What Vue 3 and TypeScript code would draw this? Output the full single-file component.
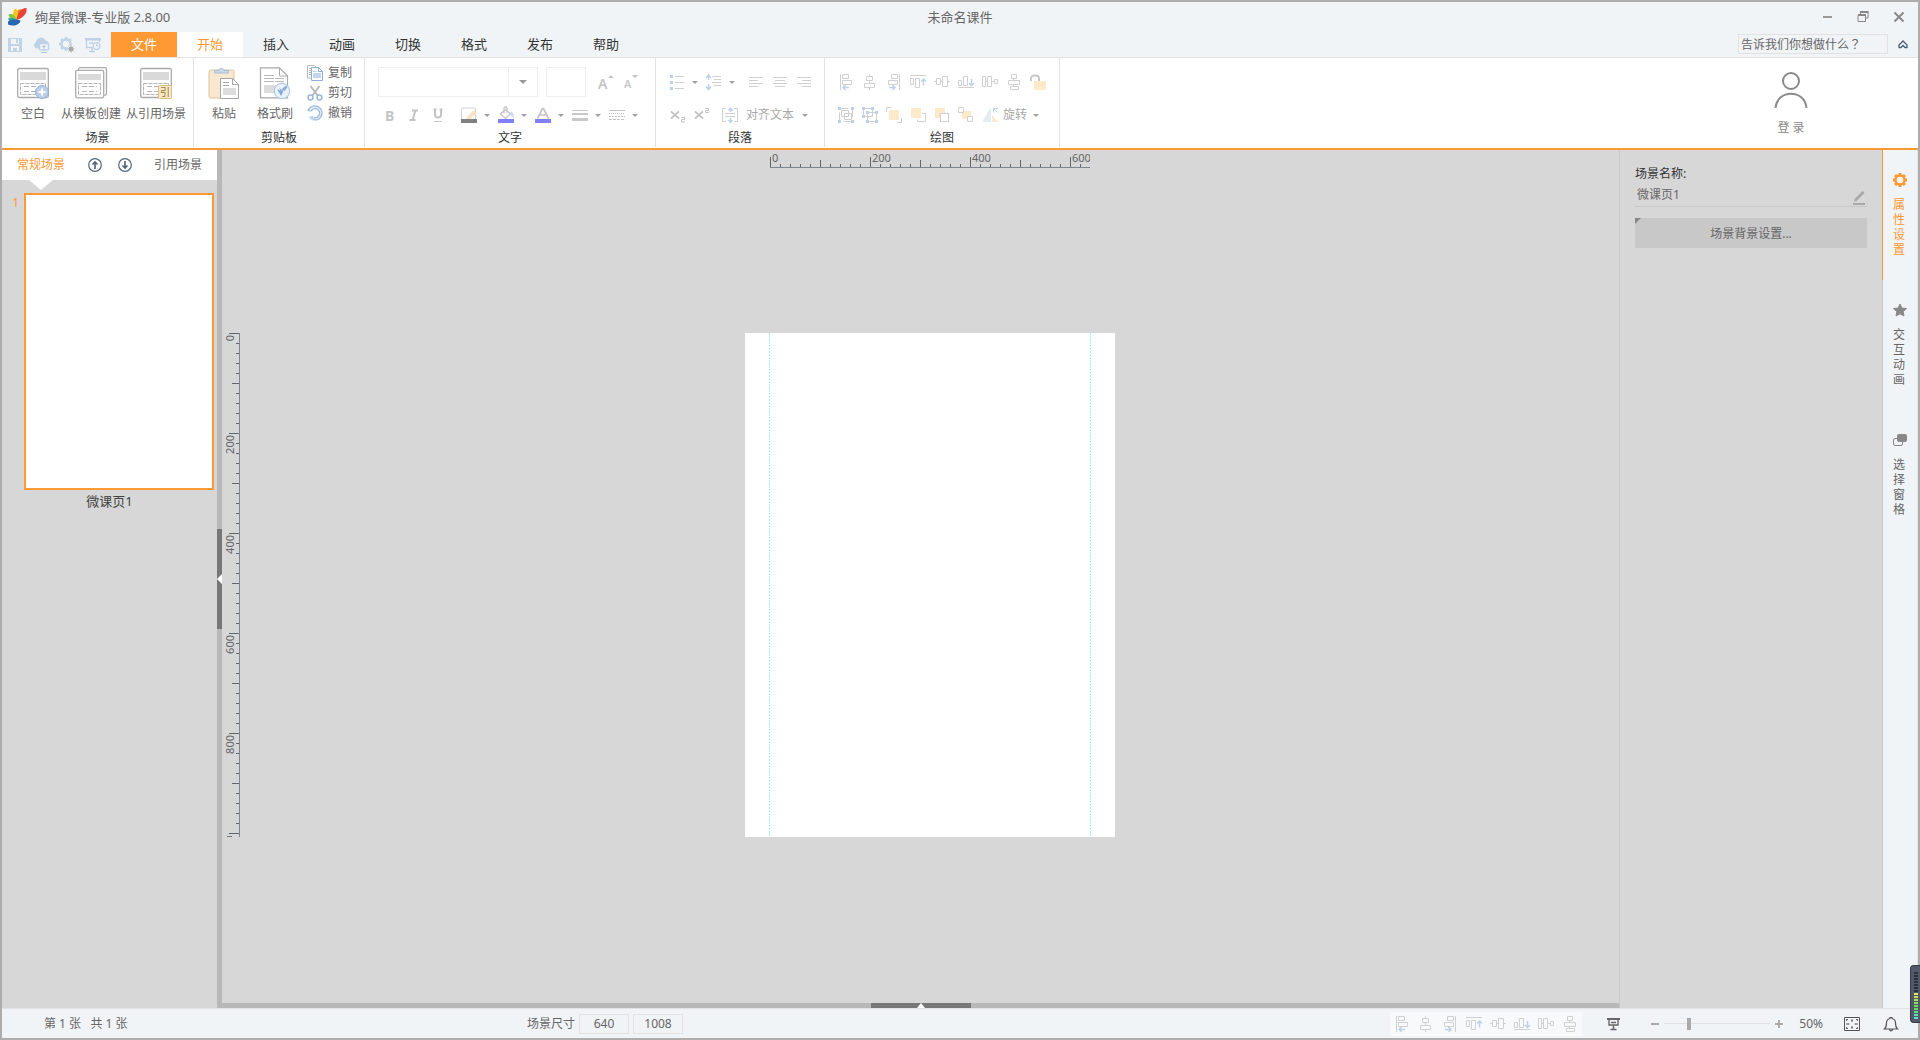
<script setup lang="ts">
import { ref } from 'vue'

interface Tool { icon: string; label: string; caret?: boolean }

const G = '#d0d0d0'
const B = '#bcd2ea'
const Y = '#fdeacb'

const glyphs: Record<string, string> = {
  save: `<path fill="#c3d3e6" fill-rule="evenodd" d="M1 1h14v14h-14zM4 2v5h8v-5zM4 9v5h8v-5z"/><path fill="#c3d3e6" d="M9 2h2v4h-2zM6 11h4v3h-4z"/>`,
  cloud: `<path fill="#bfd1e6" d="M3.500 11.500a3.500 3.500 0 0 1-.5-6.500 5 5 0 0 1 9.500-1.500 3.500 3.500 0 0 1 3 4h-9v4z"/><rect x="6.500" y="6.500" width="9" height="6.500" rx="1" fill="#f1f4f7" stroke="#bfd1e6" stroke-width="1.500"/><path stroke="#a9c3e0" d="M11 8v4M9.500 9.500h3M8 15.500h6" fill="none"/>`,
  gears: `<circle cx="7" cy="7" r="4.500" fill="none" stroke="#c3d3e6" stroke-width="2.500"/><path stroke="#c3d3e6" stroke-width="2.500" d="M7 0v2M7 12v2M0 7h2M2 2l1.500 1.500M12 2l-1.500 1.500M2 12l1.500-1.500"/><circle cx="12" cy="12" r="3.600" fill="#f1f4f7"/><circle cx="12" cy="12" r="2.200" fill="#a8a8a8"/><path stroke="#a8a8a8" d="M12 8.500v7M8.500 12h7M9.500 9.500l5 5M14.500 9.500l-5 5"/>`,
  board: `<path fill="#bfd1e6" d="M0 1h16v2.500h-16z"/><path fill="none" stroke="#bfd1e6" stroke-width="1.400" d="M1.500 3v7.500h6M14.500 3v2M4 6h4M7 10.500v3.500M4 14.500h6"/><circle cx="11.500" cy="9" r="3.300" fill="#f1f4f7" stroke="#bfd1e6" stroke-width="1.300"/><path stroke="#bfd1e6" d="M11.500 7v2h2" fill="none"/>`,
  copy: `<path fill="#fff" stroke="#b9b9b9" d="M.5.5h7l2.500 2.500v10h-9.500z"/><path stroke="#b9b9b9" d="M2 3.500h3M2 5.500h3M2 7.500h3M2 9.500h3"/><path fill="#fff" stroke="#8fb1d8" d="M4.500 2.500h7l4 4v9h-11z"/><path fill="none" stroke="#8fb1d8" d="M11.500 2.500v4h4"/><path fill="#c3d6ee" d="M6 6h4v1h-4zM6 8h8v5h-8z"/>`,
  cut: `<path stroke="#b9b9b9" stroke-width="2" d="M3.500 1l7.500 10M12.500 1l-7.500 10"/><circle cx="3.500" cy="12.500" r="2.400" fill="#fff" stroke="#9ab8dc" stroke-width="1.500"/><circle cx="12.500" cy="12.500" r="2.400" fill="#fff" stroke="#9ab8dc" stroke-width="1.500"/>`,
  undo: `<path fill="#e6effa" stroke="#9ab8dc" stroke-width="1.200" stroke-linejoin="round" d="M1 5.500C3 .5 9-.5 12.500 2.500c4 3.500 3 9.500-1.500 12-2 .8-3 .6-4 .3v-2c5 0 7-4.500 4.500-7.500-2-2.300-5.500-2.300-7.500.7z"/><path fill="#c3d6ee" d="M6.500 10.500l-5 1.500 4.500 4z"/>`,
  fontUp: `<text x="0" y="15" font-size="14" font-weight="600" fill="#c4c4c4">A</text><path fill="#c0c0c0" d="M10.500 4l2.500-3 2.500 3z"/>`,
  fontDown: `<text x="2" y="14" font-size="11" font-weight="600" fill="#c8c8c8">A</text><path fill="#c0c0c0" d="M10 1h6l-3 3z"/>`,
  bold: `<text x="3" y="13.500" font-size="14" font-weight="700" fill="#c4c4c4">B</text>`,
  italic: `<path fill="none" stroke="#c4c4c4" stroke-width="2" d="M6 3.500h6M3.500 13h6M9.500 3.500l-3 9.500"/>`,
  underline: `<path fill="none" stroke="#c4c4c4" stroke-width="2" d="M5 2.500v5a3 3 0 0 0 6 0v-5M3.500 2.500h3M9.500 2.500h3"/><path stroke="#c4c4c4" d="M4 14.500h8"/>`,
  pen: `<rect x=".5" y="1" width="14" height="12" rx="1" fill="none" stroke="${G}"/><path fill="#f9e3c4" d="M13 3l3 3-7 6-4.500 1.500 1.500-4z"/><path fill="#808080" d="M0 12h16v4h-16z"/>`,
  bucket: `<path fill="#fff" stroke="#c4c4c4" stroke-width="1.300" d="M2.500 7l5-4.500 5 4.500-5 4.500z"/><path fill="none" stroke="#c4c4c4" stroke-width="1.300" d="M6 6v-4.500a1.500 1.500 0 0 1 3 0v4"/><path fill="#c8dcf3" d="M12 4.500c3 .5 4.500 3 3.500 6-2 0-2.500-1-2.500-2.500z"/><path fill="#8080ff" d="M0 12h16v4h-16z"/>`,
  fontColor: `<path fill="none" stroke="#c4c4c4" stroke-width="1.700" d="M2.500 11.500l5-10h1l5 10M4.500 8h7"/><path fill="#8080ff" d="M0 12h16v4h-16z"/>`,
  lineWeight: `<path stroke="#c8c8c8" d="M0 3.500h16"/><path fill="#c8c8c8" d="M0 6h16v2h-16zM0 11h16v3h-16z"/>`,
  lineDash: `<path stroke="#c4c4c4" d="M0 3.500h16"/><path stroke="#c4c4c4" stroke-dasharray="1 1" d="M0 6.500h16"/><path stroke="#c4c4c4" stroke-dasharray="2 1" d="M0 9.500h16"/><path stroke="#c4c4c4" stroke-dasharray="3 1" d="M0 12.500h16"/>`,
  bullets: `<path fill="#bcd2ea" d="M1 1h3v3h-3zM1 7h3v3h-3zM1 13h3v3h-3z"/><path stroke="${G}" d="M6 2.500h9M6 8.500h9M6 14.500h9"/>`,
  spacing: `<path fill="none" stroke="${B}" stroke-width="1.500" d="M2.500 1v5M0 4l2.500-3L5 4M2.500 10v5.500M0 12.500L2.500 15.500 5 12.500"/><path stroke="${G}" d="M6 2.500h9M8 5.500h7M6 8.500h9M8 11.500h7"/>`,
  textL: `<path stroke="${G}" d="M1 3.500h14M1 6.500h9M1 9.500h14M1 12.500h9"/>`,
  textC: `<path stroke="${G}" d="M1 3.500h14M3 6.500h10M1 9.500h14M3 12.500h10"/>`,
  textR: `<path stroke="${G}" d="M1 3.500h14M6 6.500h9M1 9.500h14M6 12.500h9"/>`,
  sub: `<path stroke="#c4c4c4" stroke-width="1.800" d="M1 4.500l8 7M9 4.500l-8 7"/><path fill="none" stroke="#c4c4c4" d="M11 10.500h3.500v2h-3v2.500h3.500"/>`,
  sup: `<path stroke="#c4c4c4" stroke-width="1.800" d="M1 4.500l8 7M9 4.500l-8 7"/><path fill="none" stroke="#c4c4c4" d="M11 1.500h3.500v2h-3v2h3.500"/>`,
  textAlign: `<path fill="none" stroke="${G}" d="M4 1.500h-3.500v13h3.500M12 1.500h3.500v13h-3.500M3 6.500h10M3 9.500h10"/><path fill="none" stroke="${B}" stroke-width="1.400" d="M8.500 1v4M6.500 3.500l2-2.500 2 2.500M8.500 11v4.500M6.500 13l2 2.500 2-2.500"/>`,
  alignL: `<path fill="none" stroke="${G}" d="M2.500 0v16M4.500.5h6v4h-6zM4.500 6.500h9v4h-9z"/><path fill="none" stroke="${B}" stroke-width="1.500" d="M5 13.500h6M7.500 11l-2.500 2.500 2.500 2.500"/>`,
  alignC: `<path fill="none" stroke="${G}" d="M7.500 0v2.500M7.500 6.500v3M7.500 13.500v2.500M4.500 2.500h6v4h-6zM2.500 9.500h10v4h-10z"/>`,
  alignR: `<path fill="none" stroke="${G}" d="M13.500 0v16M5.500.5h6v4h-6zM2.500 6.500h9v4h-9z"/><path fill="none" stroke="${B}" stroke-width="1.500" d="M3 13.500h6M6.500 11l2.500 2.500-2.500 2.500"/>`,
  alignT: `<path fill="none" stroke="${G}" d="M0 1.500h16M.5 4.500h3v6h-3zM5.500 4.500h4v9h-4z"/><path fill="none" stroke="${B}" stroke-width="1.500" d="M13.500 5v6.500M11 7.500l2.500-2.500 2.500 2.500"/>`,
  alignM: `<path fill="none" stroke="${G}" d="M0 7.500h2.500M6.500 7.500h2M13.500 7.500h2.500M2.500 4.500h4v6h-4zM8.500 2.500h5v10h-5z"/>`,
  alignB: `<path fill="none" stroke="${G}" d="M0 13.500h16M.5 6.500h3v5h-3zM5.500 2.500h4v9h-4z"/><path fill="none" stroke="${B}" stroke-width="1.500" d="M13.500 5v6.500M11 9l2.500 2.500 2.500-2.500"/>`,
  distH: `<path fill="none" stroke="${G}" d="M.5 2.500h3v10h-3zM5.500 2.500h4v10h-4zM12.500 5.500h3v4h-3zM3.500 7.500h2M9.500 7.500h3"/>`,
  distV: `<path fill="none" stroke="${G}" d="M5.500.5h5v4h-5zM2.500 6.500h11v4h-11zM4.500 12.500h8v3h-8zM7.500 4.500v2M7.500 10.500v2"/>`,
  lock: `<path fill="none" stroke="#c8c8c8" stroke-width="2" d="M1 7v-2.500a3 3 0 0 1 3-3h2a3 3 0 0 1 3 3v2.500"/><path fill="${Y}" d="M4 7h12v9h-12z"/>`,
  group: `<path fill="none" stroke="${G}" d="M1.500 1.500h13v13h-13z" stroke-dasharray="9 4"/><path fill="none" stroke="${G}" d="M3.500 3.500h7v6h-7zM6.500 6.500h7v6h-7z"/><path fill="${B}" d="M0 0h3v3h-3zM13 0h3v3h-3zM0 13h3v3h-3zM13 13h3v3h-3z"/>`,
  ungroup: `<path fill="none" stroke="${G}" d="M1.500 1.500h9v8h-9zM5.500 5.500h9v9h-9z"/><path fill="${B}" d="M0 0h3v3h-3zM9 0h3v3h-3zM0 8h3v3h-3zM4 4h3v3h-3zM13 4h3v3h-3zM4 13h3v3h-3zM13 13h3v3h-3z"/>`,
  front: `<path fill="none" stroke="${G}" d="M5 .5h-4.500v4M11 15.500h4.500v-4.500"/><path fill="${Y}" d="M3 3h10v10h-10z"/>`,
  forward: `<path fill="none" stroke="${G}" d="M12 6.500h3.500v8h-8v-2"/><path fill="${Y}" d="M1 1h10v10h-10z"/>`,
  backward: `<path fill="${Y}" d="M1 1h10v10h-10z"/><rect x="6.500" y="6.500" width="8" height="8" fill="#fff" stroke="${G}"/>`,
  back: `<path fill="${Y}" d="M4 4h9v8h-9z"/><path fill="#fff" stroke="${G}" d="M.5.5h5v5h-5zM9.500 9.500h5v5h-5z"/>`,
  flip: `<path fill="#e3ebf5" d="M9 0v15h-9z"/><path fill="${Y}" d="M10 8v7h6z"/><path fill="none" stroke="${B}" d="M11.500 5.500v-4h4M11.500 1.500l4 4"/>`,
  present: `<path fill="#666" d="M1 2h13v2h-13z"/><path fill="none" stroke="#666" stroke-width="1.400" d="M3 4v5h9v-5M7.500 9v4M4.500 13.500h6M5 6.500h5"/>`,
  fit: `<path fill="none" stroke="#555" d="M.5 1.500h15v13h-15z"/><path fill="none" stroke="#777" d="M2 8h3.500M14 8h-3.500M8 3v3M8 13v-3M4 7v2M12 7v2M7 4.500h2M7 11.500h2"/><path fill="#666" d="M2 3h2v1h-1v1h-1zM14 3h-2v1h1v1h1zM2 13h2v-1h-1v-1h-1zM14 13h-2v-1h1v-1h1z"/>`,
  bell: `<path fill="none" stroke="#555" stroke-width="1.200" d="M1.500 13c1.800-1.500 2-3 2-6a4.500 4.500 0 0 1 3.500-4.500v-1h2v1a4.500 4.500 0 0 1 3.500 4.500c0 3 .2 4.500 2 6zM6.500 13.500c.5 1.800 2.500 1.800 3 0"/>`,
}

const sceneArt: Record<string, string> = {
  blank: `<rect x=".7" y="1.500" width="30.600" height="29" rx="1.500" fill="#fff" stroke="#ababab" stroke-width="1.300"/><path fill="#d9d9d9" d="M3 5h26v8h-26z"/><path fill="none" stroke="#b5b5b5" stroke-dasharray="4 1" d="M3.500 16.500h25v11h-25z"/><path stroke="#b5b5b5" stroke-dasharray="5 2" d="M7 19.500h18M7 24.500h18"/><circle cx="25" cy="25" r="6.500" fill="#bcd0ea" stroke="#8fb0da"/><path stroke="#fff" stroke-width="2" d="M25 21.500v7M21.500 25h7"/>`,
  template: `<rect x="3.500" y=".7" width="28" height="27.500" rx="1.500" fill="#fff" stroke="#ababab" stroke-width="1.300"/><rect x=".7" y="3.300" width="28" height="27.500" rx="1.500" fill="#fff" stroke="#ababab" stroke-width="1.300"/><path fill="#d9d9d9" d="M3 7h23v6h-23z"/><path fill="none" stroke="#b5b5b5" stroke-dasharray="4 1" d="M3.500 16.500h22v11h-22z"/><path stroke="#b5b5b5" stroke-dasharray="5 2" d="M7 19.500h15M7 24.500h15"/>`,
  quote: `<rect x=".7" y="1.500" width="30.600" height="29" rx="1.500" fill="#fff" stroke="#ababab" stroke-width="1.300"/><path fill="#d9d9d9" d="M3 5h26v8h-26z"/><path fill="none" stroke="#b5b5b5" stroke-dasharray="4 1" d="M3.500 16.500h25v11h-25z"/><path stroke="#b5b5b5" stroke-dasharray="5 2" d="M7 19.500h18M7 24.500h18"/><rect x="18.500" y="18.500" width="13" height="13" rx="1" fill="#f8e7c3" stroke="#d9bf83"/><text x="20" y="29" font-size="10" fill="#8f7840">引</text>`,
  paste: `<rect x="1" y="3" width="25" height="28" rx="1.500" fill="#f8e8cf" stroke="#dfc596"/><path fill="#c9d9ea" stroke="#a9bfd6" d="M6.500 6v-2.500h4.500c0-3 5-3 5 0h4.500v2.500z"/><path fill="#fff" stroke="#a6a6a6" d="M12.500 11.500h12l6 6v14h-18z"/><path fill="none" stroke="#a6a6a6" d="M24.500 11.500v6h6M15 15.500h6M15 18.500h6"/><path fill="#dcdcdc" d="M15 21h13v7h-13z"/>`,
  brush: `<path fill="#fff" stroke="#a9a9a9" stroke-width="1.200" d="M1.500.8h19l8 8v22h-27z"/><path fill="none" stroke="#a9a9a9" d="M20.500 1v8h8"/><path stroke="#b9b9b9" stroke-dasharray="10 1" d="M5 8.500h10M5 11.500h20M5 14.500h20"/><path fill="#dcdcdc" d="M5 18h16v8h-16z"/><circle cx="23" cy="24" r="7.700" fill="#e9f1fb" stroke="#a8c4e6"/><path fill="#86abd9" d="M18 22l4 7 2-4zM20 21l3 5 1.500-2.500zM23 22l4-3.500 1.500 1.500-3 4z"/>`,
}

const quick: Tool[] = [
  { icon: 'save', label: '保存' }, { icon: 'cloud', label: '云端' },
  { icon: 'gears', label: '设置' }, { icon: 'board', label: '预览' },
]
const menus = ['文件', '开始', '插入', '动画', '切换', '格式', '发布', '帮助']
const activeMenu = ref('开始')
const sceneTools: Tool[] = [
  { icon: 'blank', label: '空白' }, { icon: 'template', label: '从模板创建' }, { icon: 'quote', label: '从引用场景' },
]
const clipTools: Tool[] = [{ icon: 'paste', label: '粘贴' }, { icon: 'brush', label: '格式刷' }]
const editTools: Tool[] = [{ icon: 'copy', label: '复制' }, { icon: 'cut', label: '剪切' }, { icon: 'undo', label: '撤销' }]
const sizeTools: Tool[] = [{ icon: 'fontUp', label: '增大字号' }, { icon: 'fontDown', label: '减小字号' }]
const styleTools: Tool[] = [{ icon: 'bold', label: '加粗' }, { icon: 'italic', label: '斜体' }, { icon: 'underline', label: '下划线' }]
const colorTools: Tool[] = [
  { icon: 'pen', label: '边框颜色' }, { icon: 'bucket', label: '填充颜色' }, { icon: 'fontColor', label: '字体颜色' },
  { icon: 'lineWeight', label: '线条粗细' }, { icon: 'lineDash', label: '线型' },
]
const listTools: Tool[] = [{ icon: 'bullets', label: '项目符号' }, { icon: 'spacing', label: '行距' }]
const textAlignTools: Tool[] = [{ icon: 'textL', label: '左对齐' }, { icon: 'textC', label: '居中' }, { icon: 'textR', label: '右对齐' }]
const scriptTools: Tool[] = [{ icon: 'sub', label: '下标' }, { icon: 'sup', label: '上标' }]
const arrangeTools: Tool[] = [
  { icon: 'alignL', label: '靠左' }, { icon: 'alignC', label: '水平居中' }, { icon: 'alignR', label: '靠右' },
  { icon: 'alignT', label: '靠上' }, { icon: 'alignM', label: '垂直居中' }, { icon: 'alignB', label: '靠下' },
  { icon: 'distH', label: '横向分布' }, { icon: 'distV', label: '纵向分布' },
]
const drawTop: Tool[] = [...arrangeTools, { icon: 'lock', label: '锁定' }]
const drawBottom: Tool[] = [
  { icon: 'group', label: '组合' }, { icon: 'ungroup', label: '取消组合' }, { icon: 'front', label: '置于顶层' },
  { icon: 'forward', label: '上移一层' }, { icon: 'backward', label: '下移一层' }, { icon: 'back', label: '置于底层' },
  { icon: 'flip', label: '翻转' },
]

const railItems = ['属性设置', '交互动画', '选择窗格']
const activeRail = ref('属性设置')

const search = ref('告诉我们你想做什么？')
const sceneName = ref('微课页1')
const sceneWidth = ref('640')
const sceneHeight = ref('1008')
const zoom = ref(22)

// One tick for every 20 scene units, at half scale
const tickCount = (units: number): number[] => Array.from({ length: Math.floor(units / 20) + 1 }, (_, i) => i)
const hTicks = tickCount(638)
const vTicks = tickCount(1008)
const tickSize = (i: number): number => (i % 10 === 0 ? 10 : i % 5 === 0 ? 7 : 3)

const meterBars = Array.from({ length: 16 }, (_, i) => (i < 7 ? '#2c303b' : `hsl(${60 + (i - 7) * 14}, 70%, 62%)`))
</script>

<template>
  <div class="window">
    <header class="chrome">
      <div class="titlebar">
        <div class="brand">
          <svg width="20" height="20" viewBox="0 0 20 20" aria-hidden="true">
            <path fill="#f58220" d="M9 13C8 6 10.500 2 14.500 2c1 3.500-.5 8-5.500 11z" />
            <path fill="#fbc716" d="M9 13C5 9 5.500 3.500 8.500 1.500c3 2 3.500 7 .5 11.500z" />
            <path fill="#e8423d" d="M9.500 13C10.500 6 14.500.5 19.500 1c1 6-4 10-10 12z" />
            <path fill="#8cc63f" d="M9 13C7 14 2 12 1.500 7.500 6 6 9 9 9 13z" />
            <path fill="#35a3a0" d="M9.500 13.500C7 16 2 15.500 1 11.500c3.500-1.500 7-.5 8.500 2z" />
            <path fill="#2767b1" d="M1 14.500c4-2.500 8.500-2.500 12.500-1C12.500 18.500 6 19.500 1 17.500z" />
          </svg>
          <span>绚星微课-专业版 2.8.00</span>
        </div>
        <h1>未命名课件</h1>
        <div class="window-buttons">
          <button type="button" aria-label="最小化"><svg width="12" height="12"><path d="M2 6h9" stroke="#999" stroke-width="2" /></svg></button>
          <button type="button" aria-label="还原"><svg width="12" height="12" fill="none" stroke="#888"><path d="M1 4.500h7.500v6h-7.500zM3.500 4v-3h7.500v6h-2" /><path d="M1 4h8M3 1h8.500" stroke-width="2" /></svg></button>
          <button type="button" aria-label="关闭"><svg width="12" height="12"><path d="M1.500 1.500l9 9M10.500 1.500l-9 9" stroke="#888" stroke-width="2" /></svg></button>
        </div>
      </div>
      <div class="menubar">
        <div class="quick">
          <button v-for="t in quick" :key="t.icon" type="button" :aria-label="t.label">
            <svg width="16" height="16" v-html="glyphs[t.icon]"></svg>
          </button>
        </div>
        <nav class="menus">
          <button v-for="m in menus" :key="m" type="button" :class="{ file: m === '文件', active: m === activeMenu }" @click="activeMenu = m">{{ m }}</button>
        </nav>
        <input v-model="search" class="search" type="text" aria-label="搜索" />
        <button class="collapse" type="button" aria-label="折叠功能区">
          <svg width="10" height="9" fill="none" stroke="#4a6076" stroke-width="1.300"><path d="M1 5l4-4 4 4v2.500h-2l-2-2-2 2h-2z" /></svg>
        </button>
      </div>
    </header>

    <section class="ribbon">
      <div class="group scene">
        <div class="body bigs">
          <button v-for="t in sceneTools" :key="t.icon" class="big" type="button">
            <svg width="32" height="32" v-html="sceneArt[t.icon]"></svg><span>{{ t.label }}</span>
          </button>
        </div>
        <h2>场景</h2>
      </div>
      <div class="group clip">
        <div class="body bigs">
          <button v-for="t in clipTools" :key="t.icon" class="big" type="button">
            <svg width="32" height="32" v-html="sceneArt[t.icon]"></svg><span>{{ t.label }}</span>
          </button>
          <div class="stack">
            <button v-for="t in editTools" :key="t.icon" type="button">
              <svg width="16" height="16" v-html="glyphs[t.icon]"></svg><span>{{ t.label }}</span>
            </button>
          </div>
        </div>
        <h2>剪贴板</h2>
      </div>
      <div class="group text">
        <div class="body rows">
          <div class="row">
            <div class="font-box">
              <select aria-label="字体"></select>
              <span class="drop"><i></i></span>
            </div>
            <input class="size-box" type="text" aria-label="字号" />
            <div class="tools">
              <button v-for="t in sizeTools" :key="t.icon" class="tool" type="button" :aria-label="t.label"><svg width="16" height="16" v-html="glyphs[t.icon]"></svg></button>
            </div>
          </div>
          <div class="row low">
            <div class="tools">
              <button v-for="t in styleTools" :key="t.icon" class="tool" type="button" :aria-label="t.label"><svg width="16" height="16" v-html="glyphs[t.icon]"></svg></button>
            </div>
            <div class="tools">
              <button v-for="t in colorTools" :key="t.icon" class="split" type="button" :aria-label="t.label"><svg width="16" height="16" v-html="glyphs[t.icon]"></svg><i class="caret"></i></button>
            </div>
          </div>
        </div>
        <h2>文字</h2>
      </div>
      <div class="group para">
        <div class="body rows">
          <div class="row">
            <div class="tools">
              <button v-for="t in listTools" :key="t.icon" class="split" type="button" :aria-label="t.label"><svg width="16" height="16" v-html="glyphs[t.icon]"></svg><i class="caret"></i></button>
            </div>
            <div class="tools">
              <button v-for="t in textAlignTools" :key="t.icon" class="tool" type="button" :aria-label="t.label"><svg width="16" height="16" v-html="glyphs[t.icon]"></svg></button>
            </div>
          </div>
          <div class="row low">
            <div class="tools">
              <button v-for="t in scriptTools" :key="t.icon" class="tool" type="button" :aria-label="t.label"><svg width="16" height="16" v-html="glyphs[t.icon]"></svg></button>
            </div>
            <button class="labelled" type="button"><svg width="16" height="16" v-html="glyphs.textAlign"></svg><span>对齐文本</span><i class="caret"></i></button>
          </div>
        </div>
        <h2>段落</h2>
      </div>
      <div class="group draw">
        <div class="body rows">
          <div class="row">
            <button v-for="t in drawTop" :key="t.icon" class="tool" type="button" :aria-label="t.label"><svg width="16" height="16" v-html="glyphs[t.icon]"></svg></button>
          </div>
          <div class="row low">
            <button v-for="t in drawBottom" :key="t.icon" class="tool" type="button" :aria-label="t.label"><svg width="16" height="16" v-html="glyphs[t.icon]"></svg></button>
            <button class="rotate" type="button"><span>旋转</span><i class="caret"></i></button>
          </div>
        </div>
        <h2>绘图</h2>
      </div>
      <button class="login" type="button">
        <svg width="34" height="38" fill="none" stroke="#8a8a8a" stroke-width="2"><circle cx="17" cy="9" r="8" /><path d="M1.500 36C3 17 31 17 32.500 36" /></svg>
        <span>登 录</span>
      </button>
    </section>

    <main class="work">
      <aside class="sidebar">
        <div class="side-tabs">
          <button type="button" class="on">常规场景</button>
          <div class="movers">
            <button type="button" aria-label="上移"><svg width="14" height="14" fill="none" stroke="#56657c" stroke-width="1.200"><circle cx="7" cy="7" r="6.300" /><path stroke-width="1.700" d="M7 11v-7M4.500 6.500l2.500-2.500 2.500 2.500" /></svg></button>
            <button type="button" aria-label="下移"><svg width="14" height="14" fill="none" stroke="#56657c" stroke-width="1.200"><circle cx="7" cy="7" r="6.300" /><path stroke-width="1.700" d="M7 3v7M4.500 7.500l2.500 2.500 2.500-2.500" /></svg></button>
          </div>
          <button type="button">引用场景</button>
        </div>
        <div class="scene-item">
          <span class="num">1</span>
          <button class="thumb" type="button" aria-label="微课页1"></button>
        </div>
        <p class="scene-label">微课页1</p>
      </aside>
      <div class="vsplit"><div class="grip"><svg width="5" height="10"><path fill="#fff" d="M5 0v10l-5-5z" /></svg></div></div>

      <section class="editor">
        <div class="stage">
          <svg class="hruler" width="320" height="18">
            <path stroke="#7f868e" d="M0 17.500h320" />
            <rect v-for="i in hTicks" :key="i" :x="i * 10" :y="17 - tickSize(i)" width="1" :height="tickSize(i)" fill="#62666a" />
            <text v-for="n in 4" :key="n" :x="(n - 1) * 100 + 2" y="12">{{ (n - 1) * 200 }}</text>
          </svg>
          <svg class="vruler" width="19" height="504">
            <path stroke="#7f868e" d="M17.500 0v504" />
            <rect v-for="i in vTicks" :key="i" :y="i * 10" :x="17 - tickSize(i)" height="1" :width="tickSize(i)" fill="#62666a" />
            <text v-for="n in 5" :key="n" text-anchor="end" :transform="`translate(12 ${(n - 1) * 100 + 2}) rotate(-90)`">{{ (n - 1) * 200 }}</text>
            <path stroke="#777" d="M5 503.500h5" />
          </svg>
          <div class="paper"><div class="guides"></div></div>
        </div>
        <div class="hsplit"><div class="grip"><svg width="8" height="5"><path fill="#fff" d="M4 0l4 5h-8z" /></svg></div></div>
      </section>

      <aside class="props">
        <label for="scene-name">场景名称:</label>
        <div class="name-field">
          <input id="scene-name" v-model="sceneName" type="text" />
          <svg width="15" height="16"><path fill="#a8a8a8" d="M1 13h12v2h-12zM2 11.500l.5-2.500 8-8 2 2-8 8z" /></svg>
        </div>
        <button class="bg-button" type="button">场景背景设置...</button>
      </aside>

      <nav class="rail">
        <button v-for="(r, k) in railItems" :key="r" type="button" :class="{ on: r === activeRail }" @click="activeRail = r">
          <svg v-if="k === 0" width="16" height="16" fill="none" stroke="currentColor"><circle cx="9" cy="8" r="4.500" stroke-width="2.500" /><path stroke-width="3" d="M9 1v2M9 13v2M2 8h2M14 8h2M4 3l1.500 1.500M12.500 11.500l1.500 1.500M14 3l-1.500 1.500M5.500 11.500l-1.500 1.500" /></svg>
          <svg v-else-if="k === 1" width="16" height="16"><path fill="#888" stroke="#888" stroke-linejoin="round" d="M9 2l1.900 4.100 4.600.5-3.400 3 .9 4.400-4-2.200-4 2.200.9-4.400-3.400-3 4.600-.5z" /></svg>
          <svg v-else width="16" height="16"><rect x="2.500" y="6.500" width="9" height="7" rx="1.500" fill="none" stroke="#888" /><rect x="6" y="2" width="10" height="8" rx="2" fill="#888" /></svg>
          <span>{{ r }}</span>
        </button>
      </nav>
    </main>

    <footer class="status">
      <span class="pages">第 1 张&nbsp;&nbsp; 共 1 张</span>
      <div class="dims">
        <label for="scene-w">场景尺寸</label>
        <input id="scene-w" v-model="sceneWidth" type="text" />
        <input v-model="sceneHeight" type="text" aria-label="场景高度" />
      </div>
      <div class="arrange">
        <button v-for="t in arrangeTools" :key="t.icon" class="tool" type="button" :aria-label="t.label"><svg width="16" height="16" v-html="glyphs[t.icon]"></svg></button>
      </div>
      <button class="tool present" type="button" aria-label="放映"><svg width="16" height="16" v-html="glyphs.present"></svg></button>
      <div class="zoom">
        <button type="button" aria-label="缩小"><svg width="8" height="8"><path fill="#aaa" d="M0 3h8v2h-8z" /></svg></button>
        <input v-model.number="zoom" type="range" min="0" max="100" aria-label="缩放" />
        <button type="button" aria-label="放大"><svg width="8" height="8"><path fill="#aaa" d="M0 3h8v2h-8zM3 0h2v8h-2z" /></svg></button>
        <output>50%</output>
      </div>
      <button class="tool" type="button" aria-label="适应窗口"><svg width="16" height="16" v-html="glyphs.fit"></svg></button>
      <button class="tool" type="button" aria-label="通知"><svg width="16" height="16" v-html="glyphs.bell"></svg></button>
    </footer>

    <div class="meter" aria-hidden="true"><i v-for="(c, i) in meterBars" :key="i" :style="{ background: c }"></i></div>
  </div>
</template>

<style>
body { margin: 0; }
</style>

<style scoped>
* { box-sizing: border-box; }
.window {
  position: relative;
  display: flex;
  flex-direction: column;
  min-height: 100vh;
  border: 2px solid #adadad;
  background: #f1f4f7;
  color: #666;
  font: 12px/20px "Noto Sans", "Noto Sans CJK SC", sans-serif;
}
button, input, select {
  margin: 0;
  padding: 0;
  border: 0;
  border-radius: 0;
  background: none;
  color: inherit;
  font: inherit;
  outline: 0;
}
button { white-space: nowrap; cursor: pointer; }
svg { display: block; flex: none; overflow: visible; }
h1, h2, p { margin: 0; font-weight: 400; }

/* Title and menu */
.titlebar { display: grid; grid-template-columns: 1fr auto 1fr; align-items: center; height: 30px; font-size: 13px; }
.titlebar h1 { font-size: 13px; line-height: 20px; }
.brand { display: flex; align-items: center; gap: 8px; padding: 0 0 0 5px; }
.window-buttons { display: flex; justify-content: flex-end; padding-right: 1px; }
.window-buttons button { display: grid; place-items: center; width: 36px; height: 24px; }
.menubar { display: flex; height: 26px; border-bottom: 1px solid #e2e2e2; }
.quick { display: flex; align-items: center; gap: 10px; width: 109px; padding-left: 5px; }
.menus { display: flex; flex: 1; }
.menus button { width: 66px; padding-bottom: 1px; color: #333; font-size: 13px; }
.menus .active { background: #fff; color: #ff9933; }
.menus .file { background: #ff9933; color: #fff; }
.search {
  align-self: flex-start;
  width: 150px;
  height: 20px;
  margin-top: 2px;
  padding: 1px 2px 0;
  border: 1px solid #e2e2e2;
  font-family: "Noto Sans", "Noto Sans CJK TC", sans-serif;
}
.collapse { display: grid; place-items: center; width: 30px; height: 25px; }

/* Ribbon */
.ribbon { display: flex; height: 92px; border-bottom: 2px solid #ff9933; background: #fff; }
.group { display: flex; flex-direction: column; height: 89px; border-right: 1px solid #e2e2e2; }
.group h2 { color: #333; font-size: 12px; line-height: 20px; text-align: center; }
.scene { width: 192px; }
.clip { width: 171px; }
.text { width: 291px; }
.para { width: 169px; }
.draw { width: 235px; }
.body { flex: none; height: 70px; }
.bigs { display: flex; gap: 5px; padding-left: 8px; }
.clip .bigs { padding-left: 7px; }
.big { display: flex; flex-direction: column; align-items: center; gap: 5px; min-width: 46px; padding-top: 9px; }
.stack { display: flex; flex-direction: column; padding: 5px 0 0 4px; }
.stack button { display: flex; align-items: center; gap: 5px; height: 20px; }
.rows { display: flex; flex-direction: column; gap: 6px; padding-top: 9px; }
.row { display: flex; align-items: center; height: 30px; }
.low { height: 24px; }
.text .rows { padding-left: 13px; }
.text .row { gap: 8px; }
.para .rows { padding-left: 10px; }
.para .row { gap: 4px; }
.draw .rows { padding-left: 9px; }
.tools { display: flex; }
.tool { display: grid; place-items: center; width: 24px; height: 24px; }
.split { display: flex; align-items: center; gap: 7px; width: 37px; height: 24px; padding-left: 3px; }
.caret { border: 3px solid transparent; border-top-color: #a0a0a0; border-bottom: 0; }
.labelled { display: flex; align-items: center; padding-left: 4px; color: #aaa; }
.labelled span { margin: 0 8px; }
.rotate { display: flex; align-items: center; gap: 6px; padding-left: 1px; color: #aaa; }
.font-box { display: flex; width: 160px; height: 30px; border: 1px solid #eee; }
.font-box select { flex: 1; appearance: none; }
.drop { display: grid; place-items: center; width: 29px; border-left: 1px solid #eee; }
.drop i { border: 4px solid transparent; border-top-color: #999; border-bottom: 0; }
.size-box { width: 40px; height: 30px; border: 1px solid #eee; }
.login { display: flex; flex-direction: column; align-items: center; gap: 8px; width: 60px; margin: 0 97px 0 auto; padding-top: 14px; color: #888; }

/* Work area */
.work { display: flex; flex: 1; background: #d7d7d7; }
.sidebar { width: 215px; }
.side-tabs { display: flex; align-items: center; justify-content: space-between; position: relative; height: 30px; padding: 0 15px; background: #fff; }
.side-tabs::after { content: ""; position: absolute; top: 100%; left: 27px; border: 12px solid transparent; border-top: 10px solid #fff; border-bottom: 0; }
.side-tabs .on { color: #ff9933; }
.movers { display: flex; gap: 16px; }
.scene-item { display: flex; margin-top: 13px; }
.num { width: 22px; padding-right: 5px; color: #ff9933; text-align: right; }
.thumb { width: 190px; height: 297px; border: 2px solid #ff9933; background: #fff; }
.scene-label { margin-top: 1px; color: #444; font-size: 13px; text-align: center; }
.vsplit { display: flex; align-items: center; width: 5px; background: #b8b8b8; }
.vsplit .grip { display: grid; place-items: center; width: 5px; height: 100px; background: #777; }
.editor { display: flex; flex: 1; flex-direction: column; }
.stage { display: grid; flex: 1; grid-template: 17px 1fr / 19px 1fr; align-items: center; justify-items: center; }
.hruler { grid-area: 1 / 2; align-self: start; overflow: hidden; }
.vruler { grid-area: 2 / 1; }
.hruler text, .vruler text { fill: #666; font-size: 11px; }
.paper { grid-area: 2 / 2; width: 370px; height: 504px; padding: 0 24px; background: #fff; }
.guides {
  height: 100%;
  background:
    repeating-linear-gradient(#9df1f2 0 2px, #fff 2px 3px) left / 1px 100% no-repeat,
    repeating-linear-gradient(#9df1f2 0 2px, #fff 2px 3px) right / 1px 100% no-repeat;
}
.hsplit { display: flex; justify-content: center; height: 5px; background: #b8b8b8; }
.hsplit .grip { display: grid; place-items: center; width: 100px; height: 5px; background: #777; }
.props { display: flex; flex-direction: column; width: 263px; padding: 14px 15px; border-left: 1px solid #c8c8c8; }
.props label { color: #333; }
.name-field { display: flex; align-items: center; height: 23px; border-bottom: 1px solid #c8c8c8; }
.name-field input { flex: 1; min-width: 0; padding-left: 2px; }
.name-field svg { align-self: flex-end; }
.bg-button { position: relative; height: 30px; margin-top: 11px; padding-top: 1px; background: #c8c8c8; }
.bg-button::before { content: ""; position: absolute; top: 0; left: 0; border-top: 6px solid #888; border-right: 6px solid transparent; }
.rail { display: flex; flex-direction: column; width: 36px; border-right: 1px solid #e2e2e2; background: linear-gradient(90deg, #c8c8c8 1px, #f1f4f7 1px); }
.rail button { display: flex; flex-direction: column; align-items: center; gap: 9px; height: 130px; padding: 22px 2px 0 0; border-left: 1px solid transparent; }
.rail .on { border-left-color: #ff9933; color: #ff9933; }
.rail span { width: 12px; line-height: 15px; white-space: normal; word-break: break-all; }

/* Status bar */
.status { display: flex; align-items: center; height: 30px; border-top: 1px solid #e2e2e2; }
.pages { width: 525px; padding-left: 42px; }
.dims { display: flex; flex: 1; gap: 4px; }
.dims input { width: 50px; height: 20px; border: 1px solid #e2e2e2; text-align: center; }
.arrange { display: flex; background: #f8f9fb; }
.present { margin: 0 25px 0 20px; }
.zoom { display: flex; align-items: center; gap: 5px; margin-right: 17px; }
.zoom input { width: 106px; height: 12px; appearance: none; background: linear-gradient(#e0e0e0, #e0e0e0) center / 100% 1px no-repeat; }
.zoom input::-webkit-slider-thumb { appearance: none; width: 4px; height: 12px; background: #aaa; }
.zoom output { margin-left: 11px; }
.status > .tool:last-child { margin: 0 15px 0 15px; }
.meter {
  position: absolute;
  right: -2px;
  bottom: 15px;
  display: flex;
  flex-direction: column;
  gap: 1px;
  width: 10px;
  height: 58px;
  padding: 6px 2px 0 3px;
  border: 1px solid #353a47;
  border-right: 0;
  border-radius: 4px 0 0 4px;
  background: #535968;
}
.meter i { height: 2px; }
</style>
